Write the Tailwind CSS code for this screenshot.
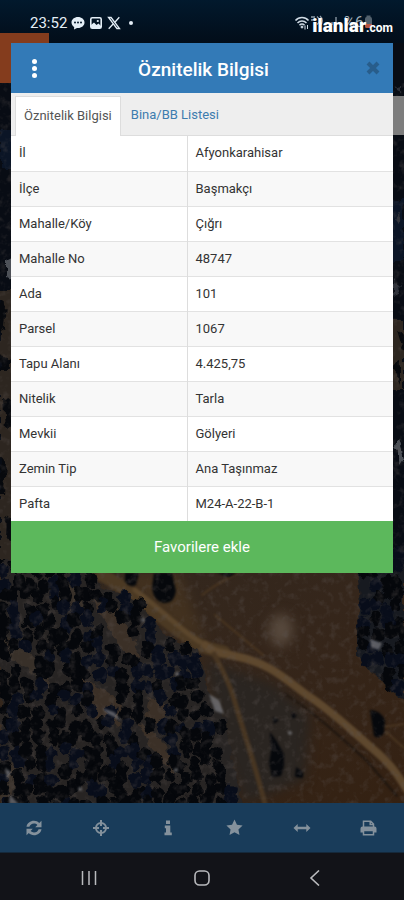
<!DOCTYPE html>
<html lang="tr">
<head>
  <meta charset="UTF-8" />
  <meta name="viewport" content="width=device-width, initial-scale=1.0"/>
  <title>Öznitelik Bilgisi</title>
  <script src="https://cdn.jsdelivr.net/npm/@tailwindcss/browser@4"></script>
</head>
<body class="bg-[#121318] font-[Roboto,'Noto_Sans',sans-serif] text-[#333]">
<div class="min-h-screen flex flex-col">

  <!-- Durum çubuğu -->
  <header class="h-[43px] shrink-0 flex items-center justify-between pl-[30px] pr-[11px] pt-[2px] bg-gradient-to-b from-[#02192d] to-[#020d19]">
    <div class="flex items-center gap-1 text-[#e4eef6]">
      <span class="text-[15px] leading-5 text-[#e4eef6]">23:52</span>
      <svg class="w-[14px] h-[14px]" viewBox="0 0 14 14">
        <path fill="currentColor" d="M7 1C3.400 1 .5 3.400.5 6.500c0 1.900 1.100 3.500 2.700 4.500L3 13.500l3-1.600 1 .1c3.600 0 6.500-2.400 6.500-5.500S10.600 1 7 1z"/>
        <g fill="#05182a"><circle cx="4" cy="6.500" r="1"/><circle cx="7" cy="6.500" r="1"/><circle cx="10" cy="6.500" r="1"/></g>
      </svg>
      <svg class="w-[14px] h-[14px]" viewBox="0 0 14 14">
        <rect x="1.800" y="1.800" width="10.400" height="10.400" rx="1.500" fill="none" stroke="currentColor" stroke-width="1.600"/>
        <path fill="currentColor" d="M2 11V9l3-2.500L7.500 9 9.500 7.500 12 10v2H2z"/><circle cx="8.800" cy="5" r="1.100" fill="currentColor"/>
      </svg>
      <svg class="w-[14px] h-[14px]" viewBox="0 0 14 14" fill="none" stroke="currentColor">
        <path d="M1.500 1.500h2.600l8.400 11H9.900z" stroke-width="1.300"/><path d="M12.300 1.300 7.900 6.200M6.100 8 1.700 12.700" stroke-width="1.300"/>
      </svg>
      <span class="w-1 h-1 ml-1 rounded-full bg-current"></span>
    </div>
    <div class="relative flex items-center">
      <svg class="w-[82px] h-[18px] mr-[17px]" viewBox="0 0 82 18" fill="none" stroke="#cfdae4">
        <path d="M1.500 6.500c3.500-4 9.500-4 13 0M3.500 9c2.500-2.700 6.500-2.700 9 0M5.500 11.300c1.500-1.600 3.500-1.600 5 0" stroke-width="1.500"/>
        <circle cx="8" cy="13" r="1" fill="#cfdae4"/>
        <path d="M11 11.500v4M13.500 11v4" stroke-width="1"/>
        <path d="M17 3h4M17 6h4M23 2.500c3 2 3 6 0 8M26 2c3 2.500 3 7 0 9" stroke-width="1.300" opacity=".7"/>
        <path d="M38 11V8M42 12V3" stroke-width="1.500" opacity=".6"/>
        <path d="M71 13V5q0-2 1.500-2V1.500h4V3Q78 3 78 5v8z" fill="#53616d" stroke="none"/>
        <path d="M71 10h7v2.500q0 1.500-1.500 1.500h-4Q71 14 71 12.500z" fill="#b75540" stroke="none"/>
      </svg>
      <span class="absolute left-[50px] -top-[2px] text-[15px] leading-5 text-[#a9b5bf]">%6</span>
      <div class="absolute right-0 top-0 flex items-baseline text-white whitespace-nowrap">
        <span class="text-[19px] leading-6 font-black">ilanlar</span><span class="text-[12px] font-bold">.com</span>
      </div>
    </div>
  </header>

  <main class="relative flex-1 pb-[230px] bg-[#070a10]">
    <!-- Uydu haritası -->
    <svg class="absolute inset-0 w-full h-full" viewBox="0 43 404 761" preserveAspectRatio="xMidYMin slice">
      <defs>
        <filter id="grain" x="0" y="0" width="100%" height="100%" color-interpolation-filters="sRGB">
          <feTurbulence type="fractalNoise" baseFrequency=".13" numOctaves="3" seed="4"/>
          <feColorMatrix values="0 0 0 0 .36  0 0 0 0 .33  0 0 0 0 .32  3 0 0 0 -1.500"/>
        </filter>
        <filter id="soft" color-interpolation-filters="sRGB"><feGaussianBlur stdDeviation="1"/></filter>
        <filter id="haze" color-interpolation-filters="sRGB"><feGaussianBlur stdDeviation="6"/></filter>
        <filter id="rough" x="-5%" y="-5%" width="110%" height="110%" color-interpolation-filters="sRGB">
          <feTurbulence type="fractalNoise" baseFrequency=".12" numOctaves="2" seed="8"/>
          <feDisplacementMap in="SourceGraphic" scale="9" xChannelSelector="R" yChannelSelector="G"/>
          <feGaussianBlur stdDeviation=".6"/>
        </filter>
        <linearGradient id="soil" x1="0" y1="0" x2="1" y2="1">
          <stop offset="0" stop-color="#32281f"/><stop offset=".5" stop-color="#35261b"/><stop offset="1" stop-color="#342112"/>
        </linearGradient>
      </defs>
      <rect y="43" width="404" height="761" fill="#080c14"/>
      <rect y="568" width="404" height="236" fill="url(#soil)"/>
      <g filter="url(#haze)">
        <path d="M205 660l70 25 35 30-5 65-60 24-25-60z" fill="#2a2521"/>
        <ellipse cx="281" cy="630" rx="12" ry="16" fill="#57493d"/>
        <path d="M120 573h60l25 70-40-20z" fill="#42311f"/>
      </g>
      <!-- Yollar -->
      <g fill="none" filter="url(#soft)" stroke-linecap="round">
        <path d="M102 575C130 590 155 612 178 630S205 648 224 652" stroke="#4b3923" stroke-width="13"/>
        <path d="M135 590C165 612 180 630 200 642" stroke="#5b462c" stroke-width="5"/>
        <path d="M205 645c8 8 18 8 30 11 35 7 50 23 72 39 28 18 47 38 66 54 17 14 25 26 34 41" stroke="#5e482e" stroke-width="8"/>
        <path d="M214 654c8 15 15 27 20 45 7 25 18 55 31 105" stroke="#483622" stroke-width="5"/>
        <path d="M285 694c32 20 62 49 82 67l30 35" stroke="#1d150f" stroke-width="2"/>
        <path d="M202 595c20-16 30-16 45-30M215 615l48 40M404 724l-20 3M404 748l-18-16" stroke="#493520" stroke-width="2"/>
      </g>
      <!-- Orman -->
      <g filter="url(#rough)">
        <path d="M0 550H75L100 585 140 603 165 635 198 650 207 690 226 720 232 760 243 804H0z" fill="#272423"/>
        <path d="M356 550l4 55-4 48 10 15 16 11 10 14 12 7V550z" fill="#171a20"/>
        <path d="M92 600l26 6 22 50 -12 3zM78 672l20 15 24 17-4 22-28-12zM150 697l20 10-10 20-14-8zM138 722l24 18 14 34-24-25z" fill="#3b3027"/>
        <path d="M50 580l30 10 6 18-30-8zM0 630l22 16 30 28-4 15-22-22-26-10zM0 765l25-5-18 44H0z" fill="#383029"/>
        <g id="trees"></g>
      </g>
      <g fill="#06080c" filter="url(#soft)">
        <path d="M154 573h18l4 18q-2 13-12 12-11-2-12-16zM125 573h14l-3 12q-8 3-11-4zM217 573h20l-8 4z"/>
        <path d="M270 732l6 8 8 14v12l-3 10-9 1-3-14 2-12zM296 767l7 5v6l-8-1zM273 717l6 3-5 4zM292 712l5 4-5 3z"/>
        <path d="M370 710q10 0 15 10l-1 13q-5 7-10 3z"/>
      </g>
      <!-- Kenar şeritleri -->
      <g filter="url(#rough)">
        <path d="M0 290h14v270H0zM390 320h14v70h-14z" fill="#2d2620"/>
        <path d="M0 130h14v40H0zM390 200h14v60h-14z" fill="#0b1526"/>
        <path d="M6 260l8-4v24l-8-4zM394 444l5-6 6 20-4 6z" fill="#4d5158"/>
        <path d="M0 300l7 6-2 22-7 4zM0 355l10 4v12H0zM4 400l12-4v26l-10 6zM0 455l6 8-2 30H0zM6 515l9 6v20l-10-4zM398 330l8 5v22zM392 365l8-4v24z" fill="#07090d"/>
        <path d="M393 88l8 4v-6zM400 210l-6 9 5 5zM394 280l8 8-8 8z" fill="#2c3039"/>
      </g>
      <rect y="83" width="404" height="721" filter="url(#grain)" opacity=".3"/>
      <g fill="#77777b" filter="url(#soft)" opacity=".75">
        <path d="M209 694l10 6 5 14-9-3zM370 639l12 4-3 7-8-3zM102 708l12 4 8 9-14-7zM5 768l6 4-4 8zM10 795l9 9H9z"/>
        <circle cx="143" cy="620" r="2"/><circle cx="177" cy="674" r="2"/><circle cx="80" cy="789" r="2"/><circle cx="176" cy="770" r="2"/><circle cx="290" cy="733" r="2"/>
      </g>
    </svg>

    <div class="absolute left-0 -top-[10px] w-[49px] h-[50px] bg-[#843c1d]"></div>
    <div class="absolute right-0 top-[53px] w-3 h-[39px] bg-[#7d7d7d]"></div>

    <!-- Pencere -->
    <section class="relative mx-[11px] bg-white">
      <div class="h-[50px] pl-[15px] pr-3 flex items-center justify-between bg-[#337ab7] text-white">
        <button type="button" aria-label="Menü" class="w-4 h-6 flex flex-col items-center justify-center gap-[2px]">
          <span class="w-[5px] h-[5px] rounded-full bg-white"></span>
          <span class="w-[5px] h-[5px] rounded-full bg-white"></span>
          <span class="w-[5px] h-[5px] rounded-full bg-white"></span>
        </button>
        <h1 class="text-[19px] leading-6 pt-1 font-medium">Öznitelik Bilgisi</h1>
        <button type="button" aria-label="Kapat" class="w-4 h-4">
          <svg class="w-full h-full" viewBox="0 0 16 16"><path d="M3 3l10 10M13 3L3 13" stroke="#285d8b" stroke-width="4"/></svg>
        </button>
      </div>

      <nav class="h-[43px] pt-[3px] pl-1 flex items-stretch bg-[#eee] border-b border-[#ddd] text-[13px]">
        <button type="button" class="-mb-px px-2 pb-[2px] bg-white border border-b-0 border-[#ddd] text-[#555]">Öznitelik Bilgisi</button>
        <button type="button" class="px-[10px] pb-[2px] text-[#3d7cae]">Bina/BB Listesi</button>
      </nav>

      <table class="w-full table-fixed border-collapse text-[13px] leading-5">
        <tbody id="attributes"></tbody>
      </table>

      <button type="button" class="block w-full h-[52px] bg-[#5cb85c] text-white text-[15px]">Favorilere ekle</button>
    </section>
  </main>

  <!-- Araç çubuğu -->
  <nav class="h-[49px] shrink-0 grid grid-cols-6 place-items-center pr-[2px] bg-[#193c5a] text-[#84919c]">
    <button type="button" aria-label="Yenile">
      <svg class="w-4 h-4" viewBox="0 0 16 16"><path d="M.5 6.800C1 3.300 4.300.8 8 .8c2.100 0 3.900.8 5.200 2.100L15.500.8v6.400H9.200l2.200-2.300C10.500 4 9.300 3.500 8 3.500c-2.200 0-4 1.300-4.600 3.300zM15.500 9.200c-.5 3.500-3.800 6-7.500 6-2.100 0-3.900-.8-5.200-2.100L.5 15.200V8.800h6.300l-2.200 2.300c.9.900 2.100 1.400 3.400 1.400 2.200 0 4-1.300 4.600-3.300z" fill="currentColor"/></svg>
    </button>
    <button type="button" aria-label="Konum">
      <svg class="w-4 h-4" viewBox="0 0 16 16" fill="none" stroke="currentColor" stroke-width="2"><circle cx="8" cy="8" r="5"/><path d="M8 0v6M8 10v6M0 8h6M10 8h6"/></svg>
    </button>
    <button type="button" aria-label="Bilgi">
      <svg class="w-4 h-4" viewBox="0 0 16 16"><path d="M6 .5h4V4H6zM4.800 5.500H10.300v7h1.500V15.200h-7.300v-2.700H6V8.200H4.800z" fill="currentColor"/></svg>
    </button>
    <button type="button" aria-label="Favoriler">
      <svg class="w-[17px] h-[17px]" viewBox="0 0 16 16"><path d="M8 .5l2.300 4.900 5.300.7-3.900 3.700 1 5.300L8 12.500l-4.700 2.600 1-5.300L.4 6.100l5.300-.7z" fill="currentColor"/></svg>
    </button>
    <button type="button" aria-label="Ölçüm">
      <svg class="w-[18px] h-4" viewBox="0 0 18 16"><path d="M.5 8l4.200-4v2.800h8.600V4l4.200 4-4.200 4V9.200H4.700V12z" fill="currentColor"/></svg>
    </button>
    <button type="button" aria-label="Yazdır">
      <svg class="w-[17px] h-4" viewBox="0 0 17 16"><path d="M3.500 7V1.200h7.200l2.800 2.800v3M10.200 1.500v3h3" fill="none" stroke="currentColor" stroke-width="1.500"/><path d="M2.500 6.500h12q2 0 2 2v4h-3V10h-10v2.500h-3v-4q0-2 2-2z" fill="currentColor"/><path d="M3.500 10.500h10v4.200h-10z" fill="none" stroke="currentColor" stroke-width="1.500"/></svg>
    </button>
  </nav>

  <!-- Android gezinme -->
  <footer class="h-[48px] shrink-0 px-8 pt-[2px] grid grid-cols-3 place-items-center border-t border-[#15293b] bg-[#121318] text-[#b9babd]">
    <button type="button" aria-label="Son uygulamalar">
      <svg class="w-4 h-4" viewBox="0 0 16 16" stroke="currentColor" stroke-width="1.500"><path d="M1.500 1v14M8 1v14M14.500 1v14"/></svg>
    </button>
    <button type="button" aria-label="Ana ekran">
      <svg class="w-4 h-4" viewBox="0 0 16 16"><rect x="1" y="1" width="14" height="14" rx="4.500" fill="none" stroke="currentColor" stroke-width="1.600"/></svg>
    </button>
    <button type="button" aria-label="Geri">
      <svg class="w-4 h-4" viewBox="0 0 16 16" fill="none" stroke="currentColor" stroke-width="1.600"><path d="M12 .5L4 8l8 7.500"/></svg>
    </button>
  </footer>
</div>

<script>
(() => {
  const attributes = [
    ["İl", "Afyonkarahisar"],
    ["İlçe", "Başmakçı"],
    ["Mahalle/Köy", "Çığrı"],
    ["Mahalle No", "48747"],
    ["Ada", "101"],
    ["Parsel", "1067"],
    ["Tapu Alanı", "4.425,75"],
    ["Nitelik", "Tarla"],
    ["Mevkii", "Gölyeri"],
    ["Zemin Tip", "Ana Taşınmaz"],
    ["Pafta", "M24-A-22-B-1"]
  ];

  document.getElementById("attributes").innerHTML = attributes.map(([name, value]) => `
    <tr class="h-[35px] odd:bg-white even:bg-[#f8f8f8] border-b border-[#e2e2e2] last:border-b-0">
      <th scope="row" class="w-[176px] px-2 text-left font-normal border-r border-[#ddd]">${name}</th>
      <td class="px-2">${value}</td>
    </tr>
  `).join("");

  // Ağaçlar: sabit tohumla rastgele dağıtılır
  let seed = 17;
  const rand = () => (seed = (seed * 16807) % 2147483647) / 2147483647;

  // Ormanın sağ sınırı [y, x]
  const edge = [[550, 75], [573, 92], [603, 140], [635, 165], [650, 196], [690, 205], [720, 224], [760, 230], [804, 242]];
  const edgeAt = y => {
    for (let i = 1; i < edge.length; i++) {
      const [y0, x0] = edge[i - 1], [y1, x1] = edge[i];
      if (y <= y1) return x0 + (x1 - x0) * (y - y0) / (y1 - y0);
    }
    return 242;
  };
  const inClearing = (x, y) =>
    (Math.abs(x - 92 - (y - 600) * .8) < 7 && y > 598 && y < 660) ||
    (Math.hypot(x - 102, y - 697) < 15) ||
    (Math.hypot(x - 157, y - 709) < 11) ||
    (Math.abs(x - 138 - (y - 722) * .75) < 5 && y > 720 && y < 775) ||
    (Math.hypot(x - 27, y - 660) < 11);

  let trees = "";
  for (let y = 552; y < 808; y += 13) {
    for (let x = 0; x < 404; x += 12) {
      const cx = x + rand() * 8, cy = y + rand() * 8;
      const rx = 5 + rand() * 2, ry = 6 + rand() * 3;
      const left = cx < edgeAt(Math.min(cy, 804)) - 3;
      const right = cx > 361 && cy < 655 + (cx - 356) * .9;
      if ((left && !inClearing(cx, cy)) || right) {
        trees += `<ellipse cx="${cx}" cy="${cy}" rx="${rx}" ry="${ry}" fill="${rand() > .7 ? "#080d1a" : "#05070b"}"/>`;
      }
    }
  }
  document.getElementById("trees").innerHTML = trees;
})();
</script>
</body>
</html>
